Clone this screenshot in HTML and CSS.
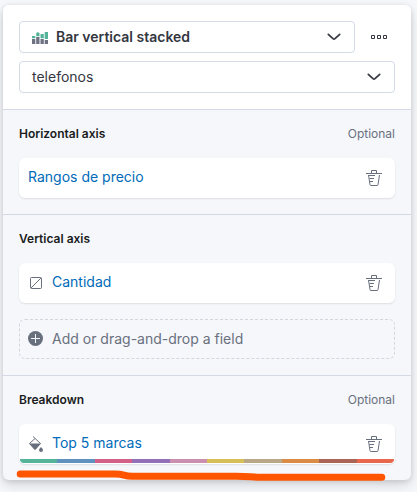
FILE: index.html
```html
<!DOCTYPE html>
<html lang="es">
<head>
<meta charset="utf-8">
<title>Bar vertical stacked</title>
<link rel="stylesheet" href="styles.css">
</head>
<body>
<svg class="defs" aria-hidden="true">
  <symbol id="trash" viewBox="0 0 16 16">
    <path d="M0 3.500H16M5.500 3V.5H10.500V3M2.500 5L4 14.700Q4.100 15.500 5 15.500H11Q11.900 15.500 12 14.700L13.500 5M2.500 5.500H9M3.500 8.500H8M4 11.500H7" fill="none" stroke="currentColor"/>
  </symbol>
  <symbol id="chevron" viewBox="0 0 14 8">
    <path d="M1.300 1.300L6 5.700Q7 6.500 8 5.700L12.700 1.300" fill="none" stroke="currentColor" stroke-width="1.700" stroke-linecap="round"/>
  </symbol>
</svg>
<main class="panel">
  <header class="head">
    <div class="row">
      <button class="select chart">
        <svg class="chart-icon" viewBox="0 0 16 12">
          <path fill="#6d7181" d="M0 7H3.300V12H0ZM4.200 5H7.500V12H4.200ZM8.500 7H11.800V12H8.500ZM12.700 8H16V12H12.700Z"/>
          <path fill="#54b399" d="M0 4H3.300V6.300H0ZM4.200 1Q5.800-.7 7.500 1V4.300H4.200ZM8.500 2H11.800V6.300H8.500ZM12.700 0H16V7H12.700Z"/>
        </svg>
        <span>Bar vertical stacked</span>
        <svg class="chevron"><use href="#chevron"/></svg>
      </button>
      <button class="more" aria-label="Menu">
        <svg width="16" height="4" viewBox="0 0 16 4"><path d="M.5.5H3.500V3.500H.5ZM6.500.5H9.500V3.500H6.500ZM12.500.5H15.500V3.500H12.500Z" fill="none" stroke="currentColor"/></svg>
      </button>
    </div>
    <button class="select"><span>telefonos</span><svg class="chevron"><use href="#chevron"/></svg></button>
  </header>

  <section class="group">
    <div class="label"><h2>Horizontal axis</h2><small>Optional</small></div>
    <div class="card"><a>Rangos de precio</a><svg class="trash"><use href="#trash"/></svg></div>
  </section>

  <section class="group">
    <div class="label"><h2>Vertical axis</h2></div>
    <div class="card">
      <svg class="icon" viewBox="0 0 16 16"><rect x="2.500" y="2.500" width="11" height="11" rx="1" fill="none" stroke="currentColor"/><path d="M3 13L13 3" stroke="currentColor"/></svg>
      <a>Cantidad</a><svg class="trash"><use href="#trash"/></svg>
    </div>
    <button class="card add">
      <svg class="icon" viewBox="0 0 16 16"><circle cx="7.500" cy="7.500" r="7.500" fill="currentColor"/><path d="M3 7.500H12M7.500 3V12" stroke="#f5f7fa"/></svg>
      <span>Add or drag-and-drop a field</span>
    </button>
  </section>

  <section class="group">
    <div class="label"><h2>Breakdown</h2><small>Optional</small></div>
    <div class="card breakdown">
      <svg class="icon" viewBox="0 0 16 16"><path d="M5 .5L12.500 7.500L7 13L1.500 7.500L7 2.500" fill="none" stroke="currentColor"/><path d="M1 7.500H13L8 13.300Q7 14.300 6 13.300ZM13 11Q15 13 15 14A2 2 0 0 1 11 14Q11 13 13 11Z" fill="currentColor"/></svg>
      <a>Top 5 marcas</a><svg class="trash"><use href="#trash"/></svg>
      <div class="palette"><i></i><i></i><i></i><i></i><i></i><i></i><i></i><i></i><i></i><i></i></div>
    </div>
  </section>
  <svg class="marker" viewBox="0 0 380 14"><path d="M7.200 5H102Q107 5 111 6.200T121 7.200H220Q230 7.100 238 7.700T252 8.200H368.800" fill="none" stroke="#ff5500" stroke-width="7" stroke-linecap="round"/></svg>
</main>
</body>
</html>
```
FILE: styles.css
```css
* { box-sizing: border-box; }
body {
  margin: 0;
  height: 492px;
  padding: 5px 6px 12px 3px;
  overflow: hidden;
  background: #f5f7fb;
  font: 14px/20px Inter, sans-serif;
  color: #343741;
}
button { font: inherit; color: inherit; padding: 0; background: none; border: 0; text-align: left; }
.defs { position: absolute; width: 0; height: 0; }
.panel {
  position: relative;
  height: 475px;
  border-radius: 6px;
  background: #f5f7fb;
  box-shadow: 0 1px 5px rgba(0,0,0,.1), 0 4px 8px rgba(0,0,0,.07), 0 6px 15px rgba(0,0,0,.08);
}
.head {
  display: flex;
  flex-direction: column;
  gap: 8px;
  height: 104px;
  padding: 16px;
  background: #fff;
  border-radius: 6px 6px 0 0;
}
.row { display: flex; }
.select {
  display: flex;
  align-items: center;
  height: 32px;
  padding: 0 13px 0 12px;
  border: 1px solid #d3dae6;
  border-radius: 4px;
  background: #fff;
}
.chart { width: 336px; font-weight: 600; }
.chart-icon { width: 16px; height: 12px; margin: 2px 8px 0 0; }
.chevron { width: 14px; height: 8px; margin-left: auto; }
.more { display: flex; align-items: center; margin-left: 16px; }
.group { padding: 16px; border-top: 1px solid #d3dae6; }
.label { display: flex; justify-content: space-between; height: 16px; margin-bottom: 16px; line-height: 16px; }
.label h2 { margin: 0; font-size: 12px; font-weight: 600; color: #1a1c21; }
.label small { font-size: 12px; color: #69707d; }
.card {
  position: relative;
  display: flex;
  align-items: center;
  width: 100%;
  height: 40px;
  padding: 0 13px 2px 9px;
  border-radius: 6px;
  background: #fff;
  box-shadow: 0 1px 2px rgba(0,0,0,.1);
  color: #69707d;
}
.card a { color: #006bb8; }
.icon { width: 16px; height: 16px; margin-right: 8px; flex: none; position: relative; top: 1px; }
.trash { width: 16px; height: 16px; margin-left: auto; position: relative; top: 1px; }
.add {
  margin-top: 16px;
  padding: 0 8px;
  border: 1px dashed #d3d6dd;
  background: none;
  box-shadow: none;
}
.add .icon { top: 0; }
.breakdown { overflow: hidden; }
.palette { position: absolute; left: 1px; right: 1px; bottom: 1px; height: 4px; display: flex; overflow: hidden; border-radius: 0 0 5px 5px; }
.palette i { flex: 1; background: #54b399; }
.palette i:nth-child(2) { background: #6092c0; }
.palette i:nth-child(3) { background: #d36086; }
.palette i:nth-child(4) { background: #9170b8; }
.palette i:nth-child(5) { background: #ca8eae; }
.palette i:nth-child(6) { background: #d6bf57; }
.palette i:nth-child(7) { background: #b9a888; }
.palette i:nth-child(8) { background: #da8b45; }
.palette i:nth-child(9) { background: #aa6556; }
.palette i:nth-child(10) { background: #e7664c; }
.marker { position: absolute; left: 10px; top: 464px; width: 380px; height: 14px; }
```
